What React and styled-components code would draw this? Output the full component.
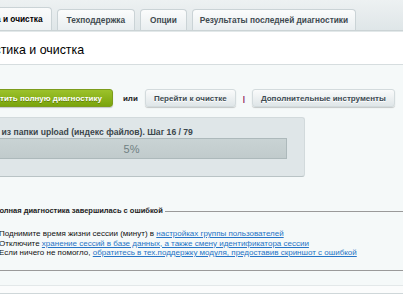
import styled, { createGlobalStyle } from 'styled-components'

const GlobalStyle = createGlobalStyle`
  html, body {
    margin: 0;
    padding: 0;
  }
  body {
    width: 403px;
    height: 294px;
    overflow: hidden;
    background: #dde3e5;
    font-family: "Liberation Sans", Arial, sans-serif;
  }
`

const Page = styled.div`
  width: 520px;
  margin-left: -64px;
`

const TabBar = styled.div`
  display: flex;
  align-items: flex-end;
  gap: 5px;
  height: 31px;
  box-sizing: border-box;
  padding-left: 4px;
  background: linear-gradient(#edf1f2, #dfe6e8);
  border-bottom: 1px solid #cbd3d5;
`

const Tab = styled.div`
  height: ${p => (p.$active ? 23 : 21)}px;
  box-sizing: border-box;
  display: flex;
  align-items: center;
  padding: 0 ${p => p.$pad || 9}px;
  font-size: 8.3px;
  font-weight: bold;
  color: ${p => (p.$active ? '#000' : '#3f4a50')};
  background: ${p => (p.$active ? 'linear-gradient(#fafbfb, #eef2f3)' : 'linear-gradient(#fbfcfc, #e9eef0)')};
  border: 1px solid #cad3d6;
  border-bottom: 0;
  border-radius: 4px 4px 0 0;
  white-space: nowrap;
`

const Header = styled.div`
  height: 34px;
  box-sizing: border-box;
  display: flex;
  align-items: center;
  padding: 3px 0 0 18px;
  background: #fff;
  border-top: 1px solid #e2e8e9;
  border-bottom: 1px solid #d6dddf;
  font-size: 12.4px;
  color: #000;
  white-space: nowrap;
`

const Body = styled.div`
  background: #f5f9f9;
  padding: 24px 0 14px 22px;
  border-bottom: 1px solid #e3e8e9;
`

const ButtonRow = styled.div`
  display: flex;
  align-items: center;
  padding-left: 8px;
  font-size: 8px;
`

const Button = styled.div`
  height: 18px;
  box-sizing: border-box;
  display: flex;
  align-items: center;
  padding: 0 ${p => (p.$green ? 10 : 8)}px;
  border-radius: 3px;
  font-weight: bold;
  white-space: nowrap;
  color: ${p => (p.$green ? '#fff' : '#3c4a51')};
  text-shadow: ${p => (p.$green ? '0 1px 0 rgba(60, 80, 0, 0.5)' : '0 1px 0 #fff')};
  background: ${p => (p.$green ? 'linear-gradient(#9cc22b, #7aa40c)' : 'linear-gradient(#fafbfb, #dfe6e8)')};
  border: 1px solid ${p => (p.$green ? '#7c9c1c' : '#d3dbdd')};
  box-shadow: 0 1px 1px rgba(0, 0, 0, 0.2);
`

const Or = styled.span`
  margin: 0 7px 0 10px;
  color: #222;
  font-weight: bold;
`

const Divider = styled.span`
  margin: 0 7px;
  color: #8b1a5a;
  font-weight: bold;
`

const ProgressBox = styled.div`
  width: 347px;
  height: 60px;
  box-sizing: border-box;
  margin-top: 10px;
  padding: 10px 17px 0;
  background: #dfe6e8;
  border: 1px solid #d2dadc;
  border-bottom-color: #b9c3c5;
  border-radius: 3px;
`

const ProgressLabel = styled.div`
  margin: 0 0 1px -7px;
  font-size: 8.6px;
  line-height: 9px;
  font-weight: bold;
  color: #3c474c;
  white-space: nowrap;
`

const Bar = styled.div`
  height: 21px;
  box-sizing: border-box;
  display: flex;
  align-items: center;
  justify-content: center;
  background: linear-gradient(#c9d3d4, #c1cbcc);
  border: 1px solid #adb9bb;
  font-size: 11px;
  color: #6f7f82;
`

const Fieldset = styled.fieldset`
  margin: 29px 0 0 -22px;
  padding: 13px 0 12px 63px;
  border: 0;
  border-top: 1px solid #9a9a9a;
  border-bottom: 1px solid #9a9a9a;
`

const Legend = styled.legend`
  padding: 0 2px 0 0;
  margin-left: -5px;
  font-size: 7.5px;
  line-height: 10px;
  font-weight: bold;
  color: #222;
`

const Line = styled.div`
  font-size: 8px;
  line-height: 9.5px;
  color: #111;
  white-space: nowrap;
`

const Link = styled.a`
  color: #2574c6;
  text-decoration: underline;
`

const Strip = styled.div`
  height: 7px;
  background: #fbfcfc;
  border-bottom: 1px solid #cfd7d9;
`

export default function App() {
  return (
    <>
      <GlobalStyle />
      <Page>
        <TabBar>
          <Tab $active $pad={8}>Диагностика и очистка</Tab>
          <Tab>Техподдержка</Tab>
          <Tab>Опции</Tab>
          <Tab $pad={7}>Результаты последней диагностики</Tab>
        </TabBar>
        <Header>Диагностика и очистка</Header>
        <Body>
          <ButtonRow>
            <Button $green>Запустить полную диагностику</Button>
            <Or>или</Or>
            <Button>Перейти к очистке</Button>
            <Divider>|</Divider>
            <Button>Дополнительные инструменты</Button>
          </ButtonRow>
          <ProgressBox>
            <ProgressLabel>Файлы из папки upload (индекс файлов). Шаг 16 / 79</ProgressLabel>
            <Bar>5%</Bar>
          </ProgressBox>
          <Fieldset>
            <Legend>Полная диагностика завершилась с ошибкой</Legend>
            <Line>
              Поднимите время жизни сессии (минут) в <Link href="#">настройках группы пользователей</Link>
            </Line>
            <Line>
              Отключите <Link href="#">хранение сессий в базе данных, а также смену идентификатора сессии</Link>
            </Line>
            <Line>
              Если ничего не помогло, <Link href="#">обратитесь в тех.поддержку модуля, предоставив скриншот с ошибкой</Link>
            </Line>
          </Fieldset>
        </Body>
        <Strip />
      </Page>
    </>
  )
}
